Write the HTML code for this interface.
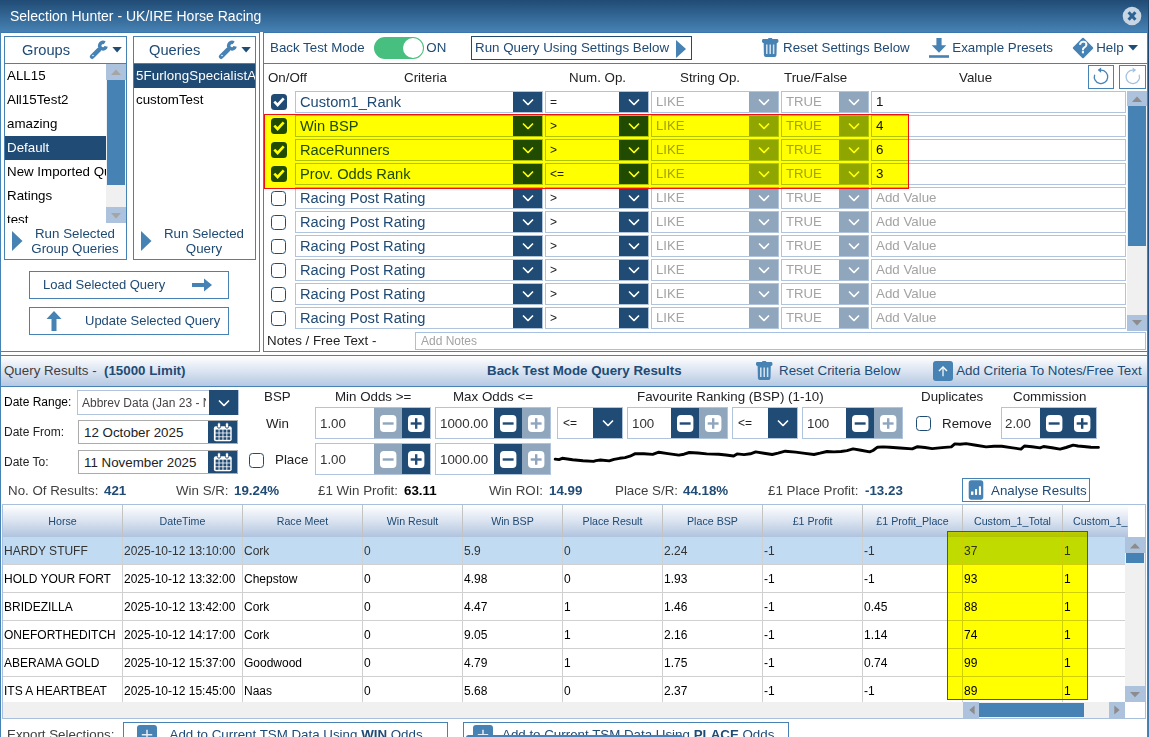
<!DOCTYPE html><html><head><meta charset='utf-8'><title>Selection Hunter - UK/IRE Horse Racing</title><style>
*{box-sizing:border-box;margin:0;padding:0}
html,body{width:1149px;height:737px;overflow:hidden;background:#fff}
body{font-family:"Liberation Sans",Arial,sans-serif;font-size:13.33px;color:#204b75;position:relative}
.ab{position:absolute}
.t{position:absolute;white-space:nowrap;line-height:16px}
.b{font-weight:bold}
.bx{position:absolute;border:1px solid #4682b4;background:#fff}
.cb{position:absolute;border:1px solid #b0c4de;background:#fff;height:22px}
.dd{position:absolute;background:#204b75}
.dd.dis{background:#90a6bc}
.dd svg{position:absolute;left:50%;top:50%;transform:translate(-50%,-50%)}
.ck{position:absolute;width:16px;height:16px;border-radius:3.5px}
.ck.on{background:#204b75}
.ck.off{border:1.8px solid #204b75;background:#fff;width:15px;height:15px;border-radius:3.5px;margin:1px 0 0 0}
.li{position:absolute;left:0;height:24px;line-height:24px;color:#000;font-size:13.33px;white-space:nowrap;overflow:hidden;padding-left:2px}
.li.sel{background:#204b75;color:#fff}
.ph{color:#a3a3a3}
.sp{position:absolute;height:32px;background:#204b75}
.sp.dis{background:#90a6bc}
.th{position:absolute;top:0;height:32px;line-height:32px;text-align:center;font-size:10.67px;color:#204b75;border-right:1px solid #c3c3c3}
.td{position:absolute;height:28px;line-height:28.5px;font-size:12px;color:#000;white-space:nowrap;overflow:hidden;padding-left:1px;border-right:1px solid #d0d0d0;border-bottom:1px solid #d0d0d0}
</style></head><body>
<div class="ab" style="left:0;top:0;width:1149px;height:33px;background:#3b77ae"></div>
<div class="ab" style="left:0;top:0;width:1149px;height:32px;background:linear-gradient(#204b75,#4682b4)"></div>
<div class="t" style="left:10px;top:7px;font-size:14px;color:#fff;line-height:18px">Selection Hunter - UK/IRE Horse Racing</div>
<svg class="ab" style="left:1122px;top:6px" width="20" height="20" viewBox="0 0 20 20"><circle cx="10" cy="10" r="9.3" fill="#c8d6e4"/><path d="M6.6 6.3 L13.4 13.7 M13.4 6.3 L6.6 13.7" stroke="#2c6294" stroke-width="3" stroke-linecap="butt"/></svg>
<div class="ab" style="left:0;top:32px;width:1px;height:705px;background:#4682b4"></div>
<div class="ab" style="left:1147px;top:32px;width:1px;height:705px;background:#4682b4"></div>
<div class="ab" style="left:1148px;top:0;width:1px;height:737px;background:linear-gradient(#1d456c,#2a5b8d 45%,#4380b2)"></div>
<div class="ab" style="left:0;top:33px;width:260px;height:319px;border:1px solid #4682b4;border-top:none;background:#fff"></div>
<div class="bx" style="left:4px;top:36px;width:123px;height:224px"></div>
<div class="ab" style="left:4px;top:63px;width:123px;height:1px;background:#4682b4"></div>
<div class="t" style="left:22px;top:41px;font-size:14.67px;line-height:18px">Groups</div>
<svg class="ab" style="left:88px;top:38px" width="22" height="22" viewBox="0 0 22 22"><path d="M11.1 11.6L4.1 18.7" stroke="#4682b4" stroke-width="4.6" stroke-linecap="round" fill="none"/><path d="M16.7 4.9A3.25 3.25 0 1 0 18.1 8.3" stroke="#4682b4" stroke-width="3.5" fill="none"/><circle cx="5" cy="17.6" r="0.75" fill="#fff"/></svg>
<svg class="ab" style="left:112px;top:47px" width="10" height="6" viewBox="0 0 10 6"><path d="M0.4 0H9.8L5.1 5.5Z" fill="#204b75"/></svg>
<div class="bx" style="left:133px;top:36px;width:123px;height:224px"></div>
<div class="ab" style="left:133px;top:63px;width:123px;height:1px;background:#4682b4"></div>
<div class="t" style="left:149px;top:41px;font-size:14.67px;line-height:18px">Queries</div>
<svg class="ab" style="left:217px;top:38px" width="22" height="22" viewBox="0 0 22 22"><path d="M11.1 11.6L4.1 18.7" stroke="#4682b4" stroke-width="4.6" stroke-linecap="round" fill="none"/><path d="M16.7 4.9A3.25 3.25 0 1 0 18.1 8.3" stroke="#4682b4" stroke-width="3.5" fill="none"/><circle cx="5" cy="17.6" r="0.75" fill="#fff"/></svg>
<svg class="ab" style="left:241px;top:47px" width="10" height="6" viewBox="0 0 10 6"><path d="M0.4 0H9.8L5.1 5.5Z" fill="#204b75"/></svg>
<div class="ab" style="left:5px;top:64px;width:121px;height:159px;overflow:hidden">
<div class="li" style="top:0px;width:101px">ALL15</div>
<div class="li" style="top:24px;width:101px">All15Test2</div>
<div class="li" style="top:48px;width:101px">amazing</div>
<div class="li sel" style="top:72px;width:101px">Default</div>
<div class="li" style="top:96px;width:101px">New Imported Queries</div>
<div class="li" style="top:120px;width:101px">Ratings</div>
<div class="li" style="top:144px;width:101px">test</div>
<div class="ab" style="left:101px;top:0;width:20px;height:160px;background:#f0f0f0"></div>
<div class="ab" style="left:101px;top:0;width:20px;height:16px;background:#adc2dc"></div>
<svg class="ab" style="left:106px;top:5px" width="10" height="6" viewBox="0 0 10 6"><path d="M0 6H10L5 0.5Z" fill="#a5a5a5"/></svg>
<div class="ab" style="left:102px;top:16px;width:18px;height:105px;background:#4682b4"></div>
<div class="ab" style="left:101px;top:143px;width:20px;height:16px;background:#adc2dc"></div>
<svg class="ab" style="left:106px;top:148.5px" width="10" height="6" viewBox="0 0 10 6"><path d="M0 0H10L5 5.5Z" fill="#a5a5a5"/></svg>
</div>
<div class="ab" style="left:134px;top:64px;width:121px;height:160px;overflow:hidden">
<div class="li sel" style="top:0;width:121px;letter-spacing:0.09px">5FurlongSpecialistAW</div>
<div class="li" style="top:24px;width:121px">customTest</div>
</div>
<svg class="ab" style="left:12px;top:231px" width="11" height="20" viewBox="0 0 11 20"><path d="M0 0L10.5 10L0 20Z" fill="#4682b4"/></svg>
<svg class="ab" style="left:141px;top:231px" width="11" height="20" viewBox="0 0 11 20"><path d="M0 0L10.5 10L0 20Z" fill="#4682b4"/></svg>
<div class="t" style="left:27px;top:226px;width:96px;text-align:center;line-height:15px;white-space:normal">Run Selected Group Queries</div>
<div class="t" style="left:156px;top:226px;width:96px;text-align:center;line-height:15px;white-space:normal">Run Selected Query</div>
<div class="bx" style="left:29px;top:271px;width:200px;height:28px"></div>
<div class="t" style="left:43px;top:277px;font-size:13px">Load Selected Query</div>
<svg class="ab" style="left:192px;top:278px" width="20" height="14" viewBox="0 0 20 14"><path d="M0 5H12V0.5L20 7L12 13.5V9H0Z" fill="#4682b4"/></svg>
<div class="bx" style="left:29px;top:307px;width:200px;height:28px"></div>
<div class="t" style="left:85px;top:313px;font-size:13px">Update Selected Query</div>
<svg class="ab" style="left:46px;top:311px" width="16" height="20" viewBox="0 0 16 20"><path d="M5.5 20V8H0.5L8 0L15.5 8H10.5V20Z" fill="#4682b4"/></svg>
<div class="ab" style="left:260px;top:32px;width:3px;height:1px;background:#fff"></div>
<div class="ab" style="left:263px;top:33px;width:885px;height:319px;border:1px solid #4682b4;border-top:none;background:#fff"></div>
<div class="ab" style="left:263px;top:63px;width:885px;height:1px;background:#4682b4"></div>
<div class="t" style="left:270px;top:40px">Back Test Mode</div>
<div class="ab" style="left:374px;top:37px;width:50px;height:22px;border-radius:11px;background:#47bf7e"></div>
<div class="ab" style="left:403px;top:38px;width:20px;height:20px;border-radius:10px;background:#fff"></div>
<div class="t" style="left:426.3px;top:40px">ON</div>
<div class="bx" style="left:471px;top:36px;width:221px;height:24px;border-color:#204b75"></div>
<div class="t" style="left:475px;top:40px">Run Query Using Settings Below</div>
<svg class="ab" style="left:676px;top:39.5px" width="10" height="18" viewBox="0 0 10 18"><path d="M0 0L10 9L0 18Z" fill="#4682b4"/></svg>
<svg class="ab" style="left:762px;top:38px" width="17" height="20" viewBox="0 0 17 20"><rect x="0" y="1" width="16.4" height="4" rx="1.4" fill="#4682b4"/><rect x="6" y="0" width="4.4" height="3" rx="1" fill="#4682b4"/><path d="M1.6 4.5H14.8L14.5 17Q14.4 19 12.6 19H3.8Q2 19 1.9 17Z" fill="#4682b4"/><path d="M4.8 6.4V16M8.2 6.4V16M11.6 6.4V16" stroke="#d5e3f0" stroke-width="1.5"/></svg>
<div class="t" style="left:783px;top:40px">Reset Settings Below</div>
<svg class="ab" style="left:929px;top:38px" width="20" height="20" viewBox="0 0 20 20"><path d="M7.4 0H12.6V7.3H17.3L10 14.8L2.7 7.3H7.4Z" fill="#4682b4"/><rect x="0" y="17.2" width="20" height="2.6" fill="#4682b4"/></svg>
<div class="t" style="left:952.3px;top:40px">Example Presets</div>
<svg class="ab" style="left:1072px;top:37px" width="22" height="22" viewBox="0 0 22 22"><path d="M11 1.8L20.2 11L11 20.2L1.8 11Z" fill="#4682b4" stroke="#4682b4" stroke-width="2" stroke-linejoin="round"/><text x="11.2" y="16.4" font-family="Liberation Sans" font-size="16" text-anchor="middle" fill="#fff" stroke="#fff" stroke-width="0.5">?</text></svg>
<div class="t" style="left:1096.2px;top:40px">Help</div>
<svg class="ab" style="left:1128px;top:45px" width="10" height="6" viewBox="0 0 10 6"><path d="M0 0H10L5 5.5Z" fill="#204b75"/></svg>
<div class="t" style="left:268px;top:70px;color:#222">On/Off</div>
<div class="t" style="left:404px;top:70px;color:#222">Criteria</div>
<div class="t" style="left:569px;top:70px;color:#222">Num. Op.</div>
<div class="t" style="left:680px;top:70px;color:#222">String Op.</div>
<div class="t" style="left:784px;top:70px;color:#222">True/False</div>
<div class="t" style="left:959px;top:70px;color:#222">Value</div>
<div class="bx" style="left:1088px;top:65px;width:26px;height:24px"></div>
<svg class="ab" style="left:1092px;top:66px" width="18" height="20" viewBox="0 0 18 20"><path d="M9 4.2A6.7 6.7 0 1 1 2.65 8.75" fill="none" stroke="#4682b4" stroke-width="1.3"/><path d="M9.1 1.4L5.6 4.1L9.1 6.8Z" fill="#4682b4"/></svg>
<div class="bx" style="left:1119px;top:65px;width:27px;height:24px"></div>
<svg class="ab" style="left:1124px;top:66px" width="18" height="20" viewBox="0 0 18 20"><path d="M8.8 4.2A6.7 6.7 0 1 0 15.15 8.75" fill="none" stroke="#a5c2df" stroke-width="1.3"/><path d="M8.7 1.4L12.2 4.1L8.7 6.8Z" fill="#a5c2df"/></svg>
<div class="ck on" style="left:271px;top:94px"><svg width="16" height="16" viewBox="0 0 16 16"><path d="M3.3 7.7L6.6 11L12.7 4.3" fill="none" stroke="#fff" stroke-width="2.6"/></svg></div>
<div class="cb" style="left:295px;top:91px;width:248px"></div>
<div class="t" style="left:300px;top:93px;font-size:14.67px;line-height:18px">Custom1_Rank</div>
<div class="dd" style="left:513px;top:92px;width:29px;height:20px"><svg width="12" height="7" viewBox="0 0 12 7"><path d="M1 1L6 6L11 1" fill="none" stroke="#fff" stroke-width="1.6"/></svg></div>
<div class="cb" style="left:545px;top:91px;width:104px"></div>
<div class="t" style="left:550px;top:94px;font-size:12px;color:#222">=</div>
<div class="dd" style="left:619px;top:92px;width:29px;height:20px"><svg width="12" height="7" viewBox="0 0 12 7"><path d="M1 1L6 6L11 1" fill="none" stroke="#fff" stroke-width="1.6"/></svg></div>
<div class="cb" style="left:651px;top:91px;width:128px"></div>
<div class="t ph" style="left:656px;top:94px;font-size:13.2px">LIKE</div>
<div class="dd dis" style="left:749px;top:92px;width:29px;height:20px"><svg width="12" height="7" viewBox="0 0 12 7"><path d="M1 1L6 6L11 1" fill="none" stroke="#fff" stroke-width="1.6"/></svg></div>
<div class="cb" style="left:781px;top:91px;width:88px"></div>
<div class="t ph" style="left:786px;top:94px;font-size:13.2px">TRUE</div>
<div class="dd dis" style="left:839px;top:92px;width:29px;height:20px"><svg width="12" height="7" viewBox="0 0 12 7"><path d="M1 1L6 6L11 1" fill="none" stroke="#fff" stroke-width="1.6"/></svg></div>
<div class="cb" style="left:871px;top:91px;width:255px"></div>
<div class="t" style="left:876px;top:94px;font-size:13.33px;color:#111">1</div>
<div class="ck on" style="left:271px;top:118px"><svg width="16" height="16" viewBox="0 0 16 16"><path d="M3.3 7.7L6.6 11L12.7 4.3" fill="none" stroke="#fff" stroke-width="2.6"/></svg></div>
<div class="cb" style="left:295px;top:115px;width:248px"></div>
<div class="t" style="left:300px;top:117px;font-size:14.67px;line-height:18px">Win BSP</div>
<div class="dd" style="left:513px;top:116px;width:29px;height:20px"><svg width="12" height="7" viewBox="0 0 12 7"><path d="M1 1L6 6L11 1" fill="none" stroke="#fff" stroke-width="1.6"/></svg></div>
<div class="cb" style="left:545px;top:115px;width:104px"></div>
<div class="t" style="left:550px;top:118px;font-size:12px;color:#222">></div>
<div class="dd" style="left:619px;top:116px;width:29px;height:20px"><svg width="12" height="7" viewBox="0 0 12 7"><path d="M1 1L6 6L11 1" fill="none" stroke="#fff" stroke-width="1.6"/></svg></div>
<div class="cb" style="left:651px;top:115px;width:128px"></div>
<div class="t ph" style="left:656px;top:118px;font-size:13.2px">LIKE</div>
<div class="dd dis" style="left:749px;top:116px;width:29px;height:20px"><svg width="12" height="7" viewBox="0 0 12 7"><path d="M1 1L6 6L11 1" fill="none" stroke="#fff" stroke-width="1.6"/></svg></div>
<div class="cb" style="left:781px;top:115px;width:88px"></div>
<div class="t ph" style="left:786px;top:118px;font-size:13.2px">TRUE</div>
<div class="dd dis" style="left:839px;top:116px;width:29px;height:20px"><svg width="12" height="7" viewBox="0 0 12 7"><path d="M1 1L6 6L11 1" fill="none" stroke="#fff" stroke-width="1.6"/></svg></div>
<div class="cb" style="left:871px;top:115px;width:255px"></div>
<div class="t" style="left:876px;top:118px;font-size:13.33px;color:#111">4</div>
<div class="ck on" style="left:271px;top:142px"><svg width="16" height="16" viewBox="0 0 16 16"><path d="M3.3 7.7L6.6 11L12.7 4.3" fill="none" stroke="#fff" stroke-width="2.6"/></svg></div>
<div class="cb" style="left:295px;top:139px;width:248px"></div>
<div class="t" style="left:300px;top:141px;font-size:14.67px;line-height:18px">RaceRunners</div>
<div class="dd" style="left:513px;top:140px;width:29px;height:20px"><svg width="12" height="7" viewBox="0 0 12 7"><path d="M1 1L6 6L11 1" fill="none" stroke="#fff" stroke-width="1.6"/></svg></div>
<div class="cb" style="left:545px;top:139px;width:104px"></div>
<div class="t" style="left:550px;top:142px;font-size:12px;color:#222">></div>
<div class="dd" style="left:619px;top:140px;width:29px;height:20px"><svg width="12" height="7" viewBox="0 0 12 7"><path d="M1 1L6 6L11 1" fill="none" stroke="#fff" stroke-width="1.6"/></svg></div>
<div class="cb" style="left:651px;top:139px;width:128px"></div>
<div class="t ph" style="left:656px;top:142px;font-size:13.2px">LIKE</div>
<div class="dd dis" style="left:749px;top:140px;width:29px;height:20px"><svg width="12" height="7" viewBox="0 0 12 7"><path d="M1 1L6 6L11 1" fill="none" stroke="#fff" stroke-width="1.6"/></svg></div>
<div class="cb" style="left:781px;top:139px;width:88px"></div>
<div class="t ph" style="left:786px;top:142px;font-size:13.2px">TRUE</div>
<div class="dd dis" style="left:839px;top:140px;width:29px;height:20px"><svg width="12" height="7" viewBox="0 0 12 7"><path d="M1 1L6 6L11 1" fill="none" stroke="#fff" stroke-width="1.6"/></svg></div>
<div class="cb" style="left:871px;top:139px;width:255px"></div>
<div class="t" style="left:876px;top:142px;font-size:13.33px;color:#111">6</div>
<div class="ck on" style="left:271px;top:166px"><svg width="16" height="16" viewBox="0 0 16 16"><path d="M3.3 7.7L6.6 11L12.7 4.3" fill="none" stroke="#fff" stroke-width="2.6"/></svg></div>
<div class="cb" style="left:295px;top:163px;width:248px"></div>
<div class="t" style="left:300px;top:165px;font-size:14.67px;line-height:18px">Prov. Odds Rank</div>
<div class="dd" style="left:513px;top:164px;width:29px;height:20px"><svg width="12" height="7" viewBox="0 0 12 7"><path d="M1 1L6 6L11 1" fill="none" stroke="#fff" stroke-width="1.6"/></svg></div>
<div class="cb" style="left:545px;top:163px;width:104px"></div>
<div class="t" style="left:550px;top:166px;font-size:12px;color:#222">&lt;=</div>
<div class="dd" style="left:619px;top:164px;width:29px;height:20px"><svg width="12" height="7" viewBox="0 0 12 7"><path d="M1 1L6 6L11 1" fill="none" stroke="#fff" stroke-width="1.6"/></svg></div>
<div class="cb" style="left:651px;top:163px;width:128px"></div>
<div class="t ph" style="left:656px;top:166px;font-size:13.2px">LIKE</div>
<div class="dd dis" style="left:749px;top:164px;width:29px;height:20px"><svg width="12" height="7" viewBox="0 0 12 7"><path d="M1 1L6 6L11 1" fill="none" stroke="#fff" stroke-width="1.6"/></svg></div>
<div class="cb" style="left:781px;top:163px;width:88px"></div>
<div class="t ph" style="left:786px;top:166px;font-size:13.2px">TRUE</div>
<div class="dd dis" style="left:839px;top:164px;width:29px;height:20px"><svg width="12" height="7" viewBox="0 0 12 7"><path d="M1 1L6 6L11 1" fill="none" stroke="#fff" stroke-width="1.6"/></svg></div>
<div class="cb" style="left:871px;top:163px;width:255px"></div>
<div class="t" style="left:876px;top:166px;font-size:13.33px;color:#111">3</div>
<div class="ck off" style="left:271px;top:190px"></div>
<div class="cb" style="left:295px;top:187px;width:248px"></div>
<div class="t" style="left:300px;top:189px;font-size:14.67px;line-height:18px">Racing Post Rating</div>
<div class="dd" style="left:513px;top:188px;width:29px;height:20px"><svg width="12" height="7" viewBox="0 0 12 7"><path d="M1 1L6 6L11 1" fill="none" stroke="#fff" stroke-width="1.6"/></svg></div>
<div class="cb" style="left:545px;top:187px;width:104px"></div>
<div class="t" style="left:550px;top:190px;font-size:12px;color:#222">></div>
<div class="dd" style="left:619px;top:188px;width:29px;height:20px"><svg width="12" height="7" viewBox="0 0 12 7"><path d="M1 1L6 6L11 1" fill="none" stroke="#fff" stroke-width="1.6"/></svg></div>
<div class="cb" style="left:651px;top:187px;width:128px"></div>
<div class="t ph" style="left:656px;top:190px;font-size:13.2px">LIKE</div>
<div class="dd dis" style="left:749px;top:188px;width:29px;height:20px"><svg width="12" height="7" viewBox="0 0 12 7"><path d="M1 1L6 6L11 1" fill="none" stroke="#fff" stroke-width="1.6"/></svg></div>
<div class="cb" style="left:781px;top:187px;width:88px"></div>
<div class="t ph" style="left:786px;top:190px;font-size:13.2px">TRUE</div>
<div class="dd dis" style="left:839px;top:188px;width:29px;height:20px"><svg width="12" height="7" viewBox="0 0 12 7"><path d="M1 1L6 6L11 1" fill="none" stroke="#fff" stroke-width="1.6"/></svg></div>
<div class="cb" style="left:871px;top:187px;width:255px"></div>
<div class="t ph" style="left:876px;top:190px;font-size:13.33px">Add Value</div>
<div class="ck off" style="left:271px;top:214px"></div>
<div class="cb" style="left:295px;top:211px;width:248px"></div>
<div class="t" style="left:300px;top:213px;font-size:14.67px;line-height:18px">Racing Post Rating</div>
<div class="dd" style="left:513px;top:212px;width:29px;height:20px"><svg width="12" height="7" viewBox="0 0 12 7"><path d="M1 1L6 6L11 1" fill="none" stroke="#fff" stroke-width="1.6"/></svg></div>
<div class="cb" style="left:545px;top:211px;width:104px"></div>
<div class="t" style="left:550px;top:214px;font-size:12px;color:#222">></div>
<div class="dd" style="left:619px;top:212px;width:29px;height:20px"><svg width="12" height="7" viewBox="0 0 12 7"><path d="M1 1L6 6L11 1" fill="none" stroke="#fff" stroke-width="1.6"/></svg></div>
<div class="cb" style="left:651px;top:211px;width:128px"></div>
<div class="t ph" style="left:656px;top:214px;font-size:13.2px">LIKE</div>
<div class="dd dis" style="left:749px;top:212px;width:29px;height:20px"><svg width="12" height="7" viewBox="0 0 12 7"><path d="M1 1L6 6L11 1" fill="none" stroke="#fff" stroke-width="1.6"/></svg></div>
<div class="cb" style="left:781px;top:211px;width:88px"></div>
<div class="t ph" style="left:786px;top:214px;font-size:13.2px">TRUE</div>
<div class="dd dis" style="left:839px;top:212px;width:29px;height:20px"><svg width="12" height="7" viewBox="0 0 12 7"><path d="M1 1L6 6L11 1" fill="none" stroke="#fff" stroke-width="1.6"/></svg></div>
<div class="cb" style="left:871px;top:211px;width:255px"></div>
<div class="t ph" style="left:876px;top:214px;font-size:13.33px">Add Value</div>
<div class="ck off" style="left:271px;top:238px"></div>
<div class="cb" style="left:295px;top:235px;width:248px"></div>
<div class="t" style="left:300px;top:237px;font-size:14.67px;line-height:18px">Racing Post Rating</div>
<div class="dd" style="left:513px;top:236px;width:29px;height:20px"><svg width="12" height="7" viewBox="0 0 12 7"><path d="M1 1L6 6L11 1" fill="none" stroke="#fff" stroke-width="1.6"/></svg></div>
<div class="cb" style="left:545px;top:235px;width:104px"></div>
<div class="t" style="left:550px;top:238px;font-size:12px;color:#222">></div>
<div class="dd" style="left:619px;top:236px;width:29px;height:20px"><svg width="12" height="7" viewBox="0 0 12 7"><path d="M1 1L6 6L11 1" fill="none" stroke="#fff" stroke-width="1.6"/></svg></div>
<div class="cb" style="left:651px;top:235px;width:128px"></div>
<div class="t ph" style="left:656px;top:238px;font-size:13.2px">LIKE</div>
<div class="dd dis" style="left:749px;top:236px;width:29px;height:20px"><svg width="12" height="7" viewBox="0 0 12 7"><path d="M1 1L6 6L11 1" fill="none" stroke="#fff" stroke-width="1.6"/></svg></div>
<div class="cb" style="left:781px;top:235px;width:88px"></div>
<div class="t ph" style="left:786px;top:238px;font-size:13.2px">TRUE</div>
<div class="dd dis" style="left:839px;top:236px;width:29px;height:20px"><svg width="12" height="7" viewBox="0 0 12 7"><path d="M1 1L6 6L11 1" fill="none" stroke="#fff" stroke-width="1.6"/></svg></div>
<div class="cb" style="left:871px;top:235px;width:255px"></div>
<div class="t ph" style="left:876px;top:238px;font-size:13.33px">Add Value</div>
<div class="ck off" style="left:271px;top:262px"></div>
<div class="cb" style="left:295px;top:259px;width:248px"></div>
<div class="t" style="left:300px;top:261px;font-size:14.67px;line-height:18px">Racing Post Rating</div>
<div class="dd" style="left:513px;top:260px;width:29px;height:20px"><svg width="12" height="7" viewBox="0 0 12 7"><path d="M1 1L6 6L11 1" fill="none" stroke="#fff" stroke-width="1.6"/></svg></div>
<div class="cb" style="left:545px;top:259px;width:104px"></div>
<div class="t" style="left:550px;top:262px;font-size:12px;color:#222">></div>
<div class="dd" style="left:619px;top:260px;width:29px;height:20px"><svg width="12" height="7" viewBox="0 0 12 7"><path d="M1 1L6 6L11 1" fill="none" stroke="#fff" stroke-width="1.6"/></svg></div>
<div class="cb" style="left:651px;top:259px;width:128px"></div>
<div class="t ph" style="left:656px;top:262px;font-size:13.2px">LIKE</div>
<div class="dd dis" style="left:749px;top:260px;width:29px;height:20px"><svg width="12" height="7" viewBox="0 0 12 7"><path d="M1 1L6 6L11 1" fill="none" stroke="#fff" stroke-width="1.6"/></svg></div>
<div class="cb" style="left:781px;top:259px;width:88px"></div>
<div class="t ph" style="left:786px;top:262px;font-size:13.2px">TRUE</div>
<div class="dd dis" style="left:839px;top:260px;width:29px;height:20px"><svg width="12" height="7" viewBox="0 0 12 7"><path d="M1 1L6 6L11 1" fill="none" stroke="#fff" stroke-width="1.6"/></svg></div>
<div class="cb" style="left:871px;top:259px;width:255px"></div>
<div class="t ph" style="left:876px;top:262px;font-size:13.33px">Add Value</div>
<div class="ck off" style="left:271px;top:286px"></div>
<div class="cb" style="left:295px;top:283px;width:248px"></div>
<div class="t" style="left:300px;top:285px;font-size:14.67px;line-height:18px">Racing Post Rating</div>
<div class="dd" style="left:513px;top:284px;width:29px;height:20px"><svg width="12" height="7" viewBox="0 0 12 7"><path d="M1 1L6 6L11 1" fill="none" stroke="#fff" stroke-width="1.6"/></svg></div>
<div class="cb" style="left:545px;top:283px;width:104px"></div>
<div class="t" style="left:550px;top:286px;font-size:12px;color:#222">></div>
<div class="dd" style="left:619px;top:284px;width:29px;height:20px"><svg width="12" height="7" viewBox="0 0 12 7"><path d="M1 1L6 6L11 1" fill="none" stroke="#fff" stroke-width="1.6"/></svg></div>
<div class="cb" style="left:651px;top:283px;width:128px"></div>
<div class="t ph" style="left:656px;top:286px;font-size:13.2px">LIKE</div>
<div class="dd dis" style="left:749px;top:284px;width:29px;height:20px"><svg width="12" height="7" viewBox="0 0 12 7"><path d="M1 1L6 6L11 1" fill="none" stroke="#fff" stroke-width="1.6"/></svg></div>
<div class="cb" style="left:781px;top:283px;width:88px"></div>
<div class="t ph" style="left:786px;top:286px;font-size:13.2px">TRUE</div>
<div class="dd dis" style="left:839px;top:284px;width:29px;height:20px"><svg width="12" height="7" viewBox="0 0 12 7"><path d="M1 1L6 6L11 1" fill="none" stroke="#fff" stroke-width="1.6"/></svg></div>
<div class="cb" style="left:871px;top:283px;width:255px"></div>
<div class="t ph" style="left:876px;top:286px;font-size:13.33px">Add Value</div>
<div class="ck off" style="left:271px;top:310px"></div>
<div class="cb" style="left:295px;top:307px;width:248px"></div>
<div class="t" style="left:300px;top:309px;font-size:14.67px;line-height:18px">Racing Post Rating</div>
<div class="dd" style="left:513px;top:308px;width:29px;height:20px"><svg width="12" height="7" viewBox="0 0 12 7"><path d="M1 1L6 6L11 1" fill="none" stroke="#fff" stroke-width="1.6"/></svg></div>
<div class="cb" style="left:545px;top:307px;width:104px"></div>
<div class="t" style="left:550px;top:310px;font-size:12px;color:#222">></div>
<div class="dd" style="left:619px;top:308px;width:29px;height:20px"><svg width="12" height="7" viewBox="0 0 12 7"><path d="M1 1L6 6L11 1" fill="none" stroke="#fff" stroke-width="1.6"/></svg></div>
<div class="cb" style="left:651px;top:307px;width:128px"></div>
<div class="t ph" style="left:656px;top:310px;font-size:13.2px">LIKE</div>
<div class="dd dis" style="left:749px;top:308px;width:29px;height:20px"><svg width="12" height="7" viewBox="0 0 12 7"><path d="M1 1L6 6L11 1" fill="none" stroke="#fff" stroke-width="1.6"/></svg></div>
<div class="cb" style="left:781px;top:307px;width:88px"></div>
<div class="t ph" style="left:786px;top:310px;font-size:13.2px">TRUE</div>
<div class="dd dis" style="left:839px;top:308px;width:29px;height:20px"><svg width="12" height="7" viewBox="0 0 12 7"><path d="M1 1L6 6L11 1" fill="none" stroke="#fff" stroke-width="1.6"/></svg></div>
<div class="cb" style="left:871px;top:307px;width:255px"></div>
<div class="t ph" style="left:876px;top:310px;font-size:13.33px">Add Value</div>
<div class="ab" style="left:1127px;top:91px;width:20px;height:240px;background:#f0f0f0"></div>
<div class="ab" style="left:1127px;top:91px;width:20px;height:15px;background:#adc2dc"></div>
<svg class="ab" style="left:1132px;top:96px" width="10" height="6" viewBox="0 0 10 6"><path d="M0 6H10L5 0.5Z" fill="#8c8c8c"/></svg>
<div class="ab" style="left:1128px;top:106px;width:18px;height:140px;background:#4682b4"></div>
<div class="ab" style="left:1127px;top:315px;width:20px;height:16px;background:#adc2dc"></div>
<svg class="ab" style="left:1132px;top:320px" width="10" height="6" viewBox="0 0 10 6"><path d="M0 0H10L5 5.5Z" fill="#8c8c8c"/></svg>
<div class="t" style="left:267px;top:333px;color:#222">Notes / Free Text -</div>
<div class="bx" style="left:415px;top:332px;width:731px;height:18px;border-color:#a5c0e0"></div>
<div class="t ph" style="left:421px;top:333px;font-size:12px">Add Notes</div>
<div class="ab" style="left:264px;top:114px;width:645px;height:75px;background:#ffff00;mix-blend-mode:multiply"></div>
<div class="ab" style="left:264px;top:114px;width:645px;height:75px;border:1px solid #f01010"></div>
<div class="ab" style="left:1px;top:355px;width:1146px;height:382px;border-top:1px solid #4682b4;background:#fff"></div>
<div class="ab" style="left:1px;top:356px;width:1146px;height:30px;background:linear-gradient(#ffffff,#dbe4f1 50%,#b5c8e3)"></div>
<div class="ab" style="left:1px;top:386px;width:1146px;height:1px;background:#4682b4"></div>
<div class="t" style="left:4px;top:363px;color:#404040">Query Results -&nbsp; <span class="b" style="color:#204b75">(15000 Limit)</span></div>
<div class="t b" style="left:487px;top:363px">Back Test Mode Query Results</div>
<svg class="ab" style="left:756px;top:361px" width="17" height="20" viewBox="0 0 17 20"><rect x="0" y="1" width="16.4" height="4" rx="1.4" fill="#4682b4"/><rect x="6" y="0" width="4.4" height="3" rx="1" fill="#4682b4"/><path d="M1.6 4.5H14.8L14.5 17Q14.4 19 12.6 19H3.8Q2 19 1.9 17Z" fill="#4682b4"/><path d="M4.8 6.4V16M8.2 6.4V16M11.6 6.4V16" stroke="#d5e3f0" stroke-width="1.5"/></svg>
<div class="t" style="left:779px;top:363px">Reset Criteria Below</div>
<div class="ab" style="left:933px;top:361px;width:20px;height:20px;border-radius:3px;background:#4682b4"><svg width="20" height="20" viewBox="0 0 20 20"><path d="M10 15.3V6.2" fill="none" stroke="#dce8f3" stroke-width="1.5"/><path d="M6 9.9L10 5.9L14 9.9" fill="none" stroke="#fff" stroke-width="1.4"/></svg></div>
<div class="t" style="left:956.2px;top:363px">Add Criteria To Notes/Free Text</div>
<div class="t" style="left:4px;top:394px;color:#000;font-size:12px">Date Range:</div>
<div class="cb" style="left:77px;top:390px;width:162px;height:25px"></div>
<div class="t" style="left:82px;top:395px;font-size:12px;width:124px;overflow:hidden;color:#444">Abbrev Data (Jan 23 - Nov 25)</div>
<div class="dd" style="left:209px;top:390px;width:29px;height:25px"><svg width="12" height="7" viewBox="0 0 12 7"><path d="M1 1L6 6L11 1" fill="none" stroke="#fff" stroke-width="1.6"/></svg></div>
<div class="t" style="left:4px;top:424px;color:#222;font-size:12px">Date From:</div>
<div class="ab" style="left:78px;top:420px;width:160px;height:24px;border:1px solid #ababab;background:#fff"></div>
<div class="t" style="left:84px;top:425px;color:#222">12 October 2025</div>
<div class="dd" style="left:208px;top:421px;width:29px;height:22px"><svg style="position:absolute;left:5px;top:1px;transform:none" width="20" height="20" viewBox="0 0 20 20"><rect x="0.9" y="4.2" width="17.8" height="15" rx="2" fill="#fff"/><rect x="4.4" y="0.6" width="3.2" height="5.6" rx="1.6" fill="#fff" stroke="#204b75" stroke-width="0.9"/><rect x="12.4" y="0.6" width="3.2" height="5.6" rx="1.6" fill="#fff" stroke="#204b75" stroke-width="0.9"/><g fill="#204b75"><rect x="2.6" y="7.6" width="3" height="3"/><rect x="6.5" y="7.6" width="3" height="3"/><rect x="10.4" y="7.6" width="3" height="3"/><rect x="14.3" y="7.6" width="3" height="3"/><rect x="2.6" y="11.4" width="3" height="3"/><rect x="6.5" y="11.4" width="3" height="3"/><rect x="10.4" y="11.4" width="3" height="3"/><rect x="14.3" y="11.4" width="3" height="3"/><rect x="2.6" y="15.2" width="3" height="2.6"/><rect x="6.5" y="15.2" width="3" height="2.6"/><rect x="10.4" y="15.2" width="3" height="2.6"/><rect x="14.3" y="15.2" width="3" height="2.6"/></g></svg></div>
<div class="t" style="left:4px;top:454px;color:#222;font-size:12px">Date To:</div>
<div class="ab" style="left:78px;top:450px;width:160px;height:24px;border:1px solid #ababab;background:#fff"></div>
<div class="t" style="left:84px;top:455px;color:#222">11 November 2025</div>
<div class="dd" style="left:208px;top:451px;width:29px;height:22px"><svg style="position:absolute;left:5px;top:1px;transform:none" width="20" height="20" viewBox="0 0 20 20"><rect x="0.9" y="4.2" width="17.8" height="15" rx="2" fill="#fff"/><rect x="4.4" y="0.6" width="3.2" height="5.6" rx="1.6" fill="#fff" stroke="#204b75" stroke-width="0.9"/><rect x="12.4" y="0.6" width="3.2" height="5.6" rx="1.6" fill="#fff" stroke="#204b75" stroke-width="0.9"/><g fill="#204b75"><rect x="2.6" y="7.6" width="3" height="3"/><rect x="6.5" y="7.6" width="3" height="3"/><rect x="10.4" y="7.6" width="3" height="3"/><rect x="14.3" y="7.6" width="3" height="3"/><rect x="2.6" y="11.4" width="3" height="3"/><rect x="6.5" y="11.4" width="3" height="3"/><rect x="10.4" y="11.4" width="3" height="3"/><rect x="14.3" y="11.4" width="3" height="3"/><rect x="2.6" y="15.2" width="3" height="2.6"/><rect x="6.5" y="15.2" width="3" height="2.6"/><rect x="10.4" y="15.2" width="3" height="2.6"/><rect x="14.3" y="15.2" width="3" height="2.6"/></g></svg></div>
<div class="t" style="left:264px;top:389px;color:#222">BSP</div>
<div class="t" style="left:266px;top:416px;color:#222">Win</div>
<div class="ck off" style="left:249px;top:451.5px"></div>
<div class="t" style="left:275px;top:452px;color:#222">Place</div>
<div class="t" style="left:335px;top:389px;color:#222">Min Odds &gt;=</div>
<div class="t" style="left:453px;top:389px;color:#222">Max Odds &lt;=</div>
<div class="t" style="left:637px;top:389px;color:#222">Favourite Ranking (BSP) (1-10)</div>
<div class="t" style="left:921px;top:389px;color:#222">Duplicates</div>
<div class="t" style="left:1013px;top:389px;color:#222">Commission</div>
<div class="cb" style="left:315px;top:407px;width:116px;height:32px"></div>
<div class="t" style="left:320px;top:416px;color:#333">1.00</div>
<div class="ab" style="left:374px;top:408px;width:28px;height:30px;background:#90a6bc"></div>
<svg class="ab" style="left:380px;top:415px" width="17" height="17" viewBox="0 0 17 17"><rect x="0" y="0" width="16.4" height="17" rx="4" fill="#fff"/><rect x="2.7" y="7.3" width="10.9" height="2.4" fill="#90a6bc"/></svg>
<div class="ab" style="left:402px;top:408px;width:28px;height:30px;background:#204b75"></div>
<svg class="ab" style="left:408px;top:415px" width="17" height="17" viewBox="0 0 17 17"><rect x="0" y="0" width="16.4" height="17" rx="4" fill="#fff"/><rect x="2.7" y="7.3" width="10.9" height="2.4" fill="#204b75"/><rect x="7" y="3.2" width="2.4" height="10.6" fill="#204b75"/></svg>
<div class="cb" style="left:435px;top:407px;width:116px;height:32px"></div>
<div class="t" style="left:440px;top:416px;color:#333">1000.00</div>
<div class="ab" style="left:494px;top:408px;width:28px;height:30px;background:#204b75"></div>
<svg class="ab" style="left:500px;top:415px" width="17" height="17" viewBox="0 0 17 17"><rect x="0" y="0" width="16.4" height="17" rx="4" fill="#fff"/><rect x="2.7" y="7.3" width="10.9" height="2.4" fill="#204b75"/></svg>
<div class="ab" style="left:522px;top:408px;width:28px;height:30px;background:#90a6bc"></div>
<svg class="ab" style="left:528px;top:415px" width="17" height="17" viewBox="0 0 17 17"><rect x="0" y="0" width="16.4" height="17" rx="4" fill="#fff"/><rect x="2.7" y="7.3" width="10.9" height="2.4" fill="#90a6bc"/><rect x="7" y="3.2" width="2.4" height="10.6" fill="#90a6bc"/></svg>
<div class="cb" style="left:315px;top:443px;width:116px;height:32px"></div>
<div class="t" style="left:320px;top:452px;color:#333">1.00</div>
<div class="ab" style="left:374px;top:444px;width:28px;height:30px;background:#90a6bc"></div>
<svg class="ab" style="left:380px;top:451px" width="17" height="17" viewBox="0 0 17 17"><rect x="0" y="0" width="16.4" height="17" rx="4" fill="#fff"/><rect x="2.7" y="7.3" width="10.9" height="2.4" fill="#90a6bc"/></svg>
<div class="ab" style="left:402px;top:444px;width:28px;height:30px;background:#204b75"></div>
<svg class="ab" style="left:408px;top:451px" width="17" height="17" viewBox="0 0 17 17"><rect x="0" y="0" width="16.4" height="17" rx="4" fill="#fff"/><rect x="2.7" y="7.3" width="10.9" height="2.4" fill="#204b75"/><rect x="7" y="3.2" width="2.4" height="10.6" fill="#204b75"/></svg>
<div class="cb" style="left:435px;top:443px;width:116px;height:32px"></div>
<div class="t" style="left:440px;top:452px;color:#333">1000.00</div>
<div class="ab" style="left:494px;top:444px;width:28px;height:30px;background:#204b75"></div>
<svg class="ab" style="left:500px;top:451px" width="17" height="17" viewBox="0 0 17 17"><rect x="0" y="0" width="16.4" height="17" rx="4" fill="#fff"/><rect x="2.7" y="7.3" width="10.9" height="2.4" fill="#204b75"/></svg>
<div class="ab" style="left:522px;top:444px;width:28px;height:30px;background:#90a6bc"></div>
<svg class="ab" style="left:528px;top:451px" width="17" height="17" viewBox="0 0 17 17"><rect x="0" y="0" width="16.4" height="17" rx="4" fill="#fff"/><rect x="2.7" y="7.3" width="10.9" height="2.4" fill="#90a6bc"/><rect x="7" y="3.2" width="2.4" height="10.6" fill="#90a6bc"/></svg>
<div class="cb" style="left:557px;top:407px;width:66px;height:32px"></div>
<div class="t" style="left:563px;top:415px;color:#222;font-size:12px">&lt;=</div>
<div class="dd" style="left:593px;top:408px;width:29px;height:30px"><svg width="12" height="7" viewBox="0 0 12 7"><path d="M1 1L6 6L11 1" fill="none" stroke="#fff" stroke-width="1.6"/></svg></div>
<div class="cb" style="left:627px;top:407px;width:101px;height:32px"></div>
<div class="t" style="left:632px;top:416px;color:#333">100</div>
<div class="ab" style="left:671px;top:408px;width:28px;height:30px;background:#204b75"></div>
<svg class="ab" style="left:677px;top:415px" width="17" height="17" viewBox="0 0 17 17"><rect x="0" y="0" width="16.4" height="17" rx="4" fill="#fff"/><rect x="2.7" y="7.3" width="10.9" height="2.4" fill="#204b75"/></svg>
<div class="ab" style="left:699px;top:408px;width:28px;height:30px;background:#90a6bc"></div>
<svg class="ab" style="left:705px;top:415px" width="17" height="17" viewBox="0 0 17 17"><rect x="0" y="0" width="16.4" height="17" rx="4" fill="#fff"/><rect x="2.7" y="7.3" width="10.9" height="2.4" fill="#90a6bc"/><rect x="7" y="3.2" width="2.4" height="10.6" fill="#90a6bc"/></svg>
<div class="cb" style="left:732px;top:407px;width:66px;height:32px"></div>
<div class="t" style="left:738px;top:415px;color:#222;font-size:12px">&lt;=</div>
<div class="dd" style="left:768px;top:408px;width:29px;height:30px"><svg width="12" height="7" viewBox="0 0 12 7"><path d="M1 1L6 6L11 1" fill="none" stroke="#fff" stroke-width="1.6"/></svg></div>
<div class="cb" style="left:802px;top:407px;width:101px;height:32px"></div>
<div class="t" style="left:807px;top:416px;color:#333">100</div>
<div class="ab" style="left:846px;top:408px;width:28px;height:30px;background:#204b75"></div>
<svg class="ab" style="left:852px;top:415px" width="17" height="17" viewBox="0 0 17 17"><rect x="0" y="0" width="16.4" height="17" rx="4" fill="#fff"/><rect x="2.7" y="7.3" width="10.9" height="2.4" fill="#204b75"/></svg>
<div class="ab" style="left:874px;top:408px;width:28px;height:30px;background:#90a6bc"></div>
<svg class="ab" style="left:880px;top:415px" width="17" height="17" viewBox="0 0 17 17"><rect x="0" y="0" width="16.4" height="17" rx="4" fill="#fff"/><rect x="2.7" y="7.3" width="10.9" height="2.4" fill="#90a6bc"/><rect x="7" y="3.2" width="2.4" height="10.6" fill="#90a6bc"/></svg>
<div class="ck off" style="left:916px;top:415px"></div>
<div class="t" style="left:942px;top:416px;color:#222">Remove</div>
<div class="cb" style="left:1001px;top:407px;width:96px;height:32px"></div>
<div class="t" style="left:1005px;top:416px;color:#333">2.00</div>
<div class="ab" style="left:1040px;top:408px;width:28px;height:30px;background:#204b75"></div>
<svg class="ab" style="left:1046px;top:415px" width="17" height="17" viewBox="0 0 17 17"><rect x="0" y="0" width="16.4" height="17" rx="4" fill="#fff"/><rect x="2.7" y="7.3" width="10.9" height="2.4" fill="#204b75"/></svg>
<div class="ab" style="left:1068px;top:408px;width:28px;height:30px;background:#204b75"></div>
<svg class="ab" style="left:1074px;top:415px" width="17" height="17" viewBox="0 0 17 17"><rect x="0" y="0" width="16.4" height="17" rx="4" fill="#fff"/><rect x="2.7" y="7.3" width="10.9" height="2.4" fill="#204b75"/><rect x="7" y="3.2" width="2.4" height="10.6" fill="#204b75"/></svg>
<svg class="ab" style="left:0;top:0" width="1149" height="737"><path d="M555.2 459.1 L559 459.6 L562.2 458.3 L572.6 459.7 L583 460.7 L593.5 461.4 L596 460.6 L600.5 460 L609.2 460.9 L614 459.4 L619.6 458.3 L625 457.6 L630 456.2 L635.3 453.6 L644 453.8 L652.7 454.4 L658.8 452.2 L668 453.6 L678.8 455.1 L684 454.2 L689.3 452.5 L698 453 L706.7 453.9 L718.8 454.3 L726 455 L733.6 456 L737.1 453.9 L744 454.6 L750.4 453.8 L755.7 451.9 L764 453.2 L772.2 454.5 L778 453.2 L785.3 451.2 L795.7 452.1 L805 453.4 L814 454.5 L820 453.2 L827 451.5 L834 451.9 L841 451.5 L847 450.6 L853.1 448.9 L861 450.3 L869.7 451.9 L873 450.5 L877.5 447.2 L883 446.9 L889.7 447.2 L900 448 L912.3 448.9 L917.5 446.7 L925 447.5 L932.2 448.6 L942 447.6 L951.3 446.9 L954.8 443.9 L960 444.2 L966.1 443.6 L976 445.3 L986.1 446.9 L994 446.3 L1001.8 446.2 L1011 447.6 L1021 449.1 L1024.4 446 L1032 446.8 L1040.1 447.9 L1043.6 446.5 L1052 447.7 L1060.1 449.1 L1066 447.5 L1073.2 445.1 L1078 446 L1083.6 446.5 L1091 447.2 L1098.4 447.4" fill="none" stroke="#000" stroke-width="2.9" stroke-linejoin="round" stroke-linecap="round"/></svg>
<div class="t" style="left:8px;top:483px;color:#404040">No. Of Results:</div>
<div class="t b" style="left:104px;top:483px">421</div>
<div class="t" style="left:176px;top:483px;color:#404040">Win S/R:</div>
<div class="t b" style="left:234px;top:483px">19.24%</div>
<div class="t" style="left:318px;top:483px;color:#404040">£1 Win Profit:</div>
<div class="t b" style="left:404px;top:483px;color:#000">63.11</div>
<div class="t" style="left:489px;top:483px;color:#404040">Win ROI:</div>
<div class="t b" style="left:549px;top:483px">14.99</div>
<div class="t" style="left:615px;top:483px;color:#404040">Place S/R:</div>
<div class="t b" style="left:683px;top:483px">44.18%</div>
<div class="t" style="left:768px;top:483px;color:#404040">£1 Place Profit:</div>
<div class="t b" style="left:865px;top:483px">-13.23</div>
<div class="bx" style="left:962px;top:478px;width:128px;height:24px"></div>
<svg class="ab" style="left:968px;top:480px" width="17" height="21" viewBox="0 0 17 21"><rect x="0.7" y="0.3" width="14.6" height="19.4" rx="2.6" fill="#4682b4"/><rect x="3" y="11.5" width="2.4" height="3.4" fill="#fff"/><rect x="7" y="9.1" width="2.1" height="5.8" fill="#fff"/><rect x="10.9" y="6.3" width="2.1" height="8.6" fill="#fff"/></svg>
<div class="t" style="left:991px;top:483px">Analyse Results</div>
<div class="ab" style="left:2px;top:504px;width:1144px;height:215px;border:1px solid #a9c0dc;background:#fff;overflow:hidden">
<div class="ab" style="left:0;top:0;width:1125px;height:32px;background:linear-gradient(#ffffff,#dae3f0 50%,#b0c4df);overflow:hidden">
<div class="th" style="left:0px;width:120px;">Horse</div>
<div class="th" style="left:120px;width:120px;">DateTime</div>
<div class="th" style="left:240px;width:120px;">Race Meet</div>
<div class="th" style="left:360px;width:100px;">Win Result</div>
<div class="th" style="left:460px;width:100px;">Win BSP</div>
<div class="th" style="left:560px;width:100px;">Place Result</div>
<div class="th" style="left:660px;width:100px;">Place BSP</div>
<div class="th" style="left:760px;width:100px;">£1 Profit</div>
<div class="th" style="left:860px;width:100px;">£1 Profit_Place</div>
<div class="th" style="left:960px;width:100px;">Custom_1_Total</div>
<div class="th" style="left:1060px;width:100px;text-align:left;padding-left:10px;">Custom_1_</div>
</div>
<div class="ab" style="left:0;top:32px;width:1122px;height:165px;overflow:hidden">
<div class="td" style="left:0px;top:0px;width:120px;background:#c0dbf2;color:#333;">HARDY STUFF</div>
<div class="td" style="left:120px;top:0px;width:120px;background:#c0dbf2;color:#333;">2025-10-12 13:10:00</div>
<div class="td" style="left:240px;top:0px;width:120px;background:#c0dbf2;color:#333;">Cork</div>
<div class="td" style="left:360px;top:0px;width:100px;background:#c0dbf2;color:#333;">0</div>
<div class="td" style="left:460px;top:0px;width:100px;background:#c0dbf2;color:#333;">5.9</div>
<div class="td" style="left:560px;top:0px;width:100px;background:#c0dbf2;color:#333;">0</div>
<div class="td" style="left:660px;top:0px;width:100px;background:#c0dbf2;color:#333;">2.24</div>
<div class="td" style="left:760px;top:0px;width:100px;background:#c0dbf2;color:#333;">-1</div>
<div class="td" style="left:860px;top:0px;width:100px;background:#c0dbf2;color:#333;">-1</div>
<div class="td" style="left:960px;top:0px;width:100px;background:#c0dbf2;color:#333;">37</div>
<div class="td" style="left:1060px;top:0px;width:100px;background:#c0dbf2;color:#333;">1</div>
<div class="td" style="left:0px;top:28px;width:120px;">HOLD YOUR FORT</div>
<div class="td" style="left:120px;top:28px;width:120px;">2025-10-12 13:32:00</div>
<div class="td" style="left:240px;top:28px;width:120px;">Chepstow</div>
<div class="td" style="left:360px;top:28px;width:100px;">0</div>
<div class="td" style="left:460px;top:28px;width:100px;">4.98</div>
<div class="td" style="left:560px;top:28px;width:100px;">0</div>
<div class="td" style="left:660px;top:28px;width:100px;">1.93</div>
<div class="td" style="left:760px;top:28px;width:100px;">-1</div>
<div class="td" style="left:860px;top:28px;width:100px;">-1</div>
<div class="td" style="left:960px;top:28px;width:100px;">93</div>
<div class="td" style="left:1060px;top:28px;width:100px;">1</div>
<div class="td" style="left:0px;top:56px;width:120px;">BRIDEZILLA</div>
<div class="td" style="left:120px;top:56px;width:120px;">2025-10-12 13:42:00</div>
<div class="td" style="left:240px;top:56px;width:120px;">Cork</div>
<div class="td" style="left:360px;top:56px;width:100px;">0</div>
<div class="td" style="left:460px;top:56px;width:100px;">4.47</div>
<div class="td" style="left:560px;top:56px;width:100px;">1</div>
<div class="td" style="left:660px;top:56px;width:100px;">1.46</div>
<div class="td" style="left:760px;top:56px;width:100px;">-1</div>
<div class="td" style="left:860px;top:56px;width:100px;">0.45</div>
<div class="td" style="left:960px;top:56px;width:100px;">88</div>
<div class="td" style="left:1060px;top:56px;width:100px;">1</div>
<div class="td" style="left:0px;top:84px;width:120px;">ONEFORTHEDITCH</div>
<div class="td" style="left:120px;top:84px;width:120px;">2025-10-12 14:17:00</div>
<div class="td" style="left:240px;top:84px;width:120px;">Cork</div>
<div class="td" style="left:360px;top:84px;width:100px;">0</div>
<div class="td" style="left:460px;top:84px;width:100px;">9.05</div>
<div class="td" style="left:560px;top:84px;width:100px;">1</div>
<div class="td" style="left:660px;top:84px;width:100px;">2.16</div>
<div class="td" style="left:760px;top:84px;width:100px;">-1</div>
<div class="td" style="left:860px;top:84px;width:100px;">1.14</div>
<div class="td" style="left:960px;top:84px;width:100px;">74</div>
<div class="td" style="left:1060px;top:84px;width:100px;">1</div>
<div class="td" style="left:0px;top:112px;width:120px;">ABERAMA GOLD</div>
<div class="td" style="left:120px;top:112px;width:120px;">2025-10-12 15:37:00</div>
<div class="td" style="left:240px;top:112px;width:120px;">Goodwood</div>
<div class="td" style="left:360px;top:112px;width:100px;">0</div>
<div class="td" style="left:460px;top:112px;width:100px;">4.79</div>
<div class="td" style="left:560px;top:112px;width:100px;">1</div>
<div class="td" style="left:660px;top:112px;width:100px;">1.75</div>
<div class="td" style="left:760px;top:112px;width:100px;">-1</div>
<div class="td" style="left:860px;top:112px;width:100px;">0.74</div>
<div class="td" style="left:960px;top:112px;width:100px;">99</div>
<div class="td" style="left:1060px;top:112px;width:100px;">1</div>
<div class="td" style="left:0px;top:140px;width:120px;">ITS A HEARTBEAT</div>
<div class="td" style="left:120px;top:140px;width:120px;">2025-10-12 15:45:00</div>
<div class="td" style="left:240px;top:140px;width:120px;">Naas</div>
<div class="td" style="left:360px;top:140px;width:100px;">0</div>
<div class="td" style="left:460px;top:140px;width:100px;">5.68</div>
<div class="td" style="left:560px;top:140px;width:100px;">0</div>
<div class="td" style="left:660px;top:140px;width:100px;">2.37</div>
<div class="td" style="left:760px;top:140px;width:100px;">-1</div>
<div class="td" style="left:860px;top:140px;width:100px;">-1</div>
<div class="td" style="left:960px;top:140px;width:100px;">89</div>
<div class="td" style="left:1060px;top:140px;width:100px;">1</div>
</div>
<div class="ab" style="left:1122px;top:32px;width:20px;height:165px;background:#f0f0f0"></div>
<div class="ab" style="left:1122px;top:32px;width:20px;height:16px;background:#adc2dc"></div>
<svg class="ab" style="left:1127px;top:38px" width="10" height="6" viewBox="0 0 10 6"><path d="M0 5.5H10L5 0.3Z" fill="#8c8c8c"/></svg>
<div class="ab" style="left:1123px;top:48px;width:18px;height:10px;background:#4682b4"></div>
<div class="ab" style="left:1122px;top:181px;width:20px;height:16px;background:#adc2dc"></div>
<svg class="ab" style="left:1127px;top:187px" width="10" height="6" viewBox="0 0 10 6"><path d="M0 0H10L5 5.3Z" fill="#8c8c8c"/></svg>
<div class="ab" style="left:0;top:197px;width:1122px;height:16px;background:#f0f0f0"></div>
<div class="ab" style="left:960px;top:197px;width:16px;height:16px;background:#adc2dc"></div>
<svg class="ab" style="left:966px;top:200px" width="6" height="10" viewBox="0 0 6 10"><path d="M5.6 0.5V9.5L0.3 5Z" fill="#8c8c8c"/></svg>
<div class="ab" style="left:976px;top:198px;width:105px;height:14px;background:#4682b4"></div>
<div class="ab" style="left:1106px;top:197px;width:16px;height:16px;background:#adc2dc"></div>
<svg class="ab" style="left:1111px;top:200px" width="6" height="10" viewBox="0 0 6 10"><path d="M0.3 0.5V9.5L5.6 5Z" fill="#8c8c8c"/></svg>
</div>
<div class="ab" style="left:947px;top:531px;width:141px;height:169px;background:#ffff00;mix-blend-mode:multiply"></div>
<div class="ab" style="left:947px;top:531px;width:141px;height:169px;border:1px solid #f01010"></div>
<div class="t" style="left:7px;top:727px;color:#404040">Export Selections:</div>
<div class="bx" style="left:123px;top:722px;width:325px;height:30px"></div>
<div class="ab" style="left:137px;top:725px;width:20px;height:20px;border-radius:3px;background:#4682b4"><svg width="20" height="20" viewBox="0 0 20 20"><path d="M10 4.8V15M4.8 9.8H15.2" stroke="#e4edf6" stroke-width="1.5"/></svg></div>
<div class="t" style="left:169.5px;top:727px">Add to Current TSM Data Using <span class="b">WIN</span> Odds</div>
<div class="bx" style="left:463px;top:722px;width:326px;height:30px"></div>
<div class="ab" style="left:473px;top:725px;width:20px;height:20px;border-radius:3px;background:#4682b4"><svg width="20" height="20" viewBox="0 0 20 20"><path d="M10 4.8V15M4.8 9.8H15.2" stroke="#e4edf6" stroke-width="1.5"/></svg></div>
<div class="t" style="left:502px;top:727px">Add to Current TSM Data Using <span class="b">PLACE</span> Odds</div>
<div class="ab" style="left:466px;top:734.7px;width:217px;height:4px;background:#4682b4;border-radius:2.5px 2.5px 0 0"></div>
</body></html>
